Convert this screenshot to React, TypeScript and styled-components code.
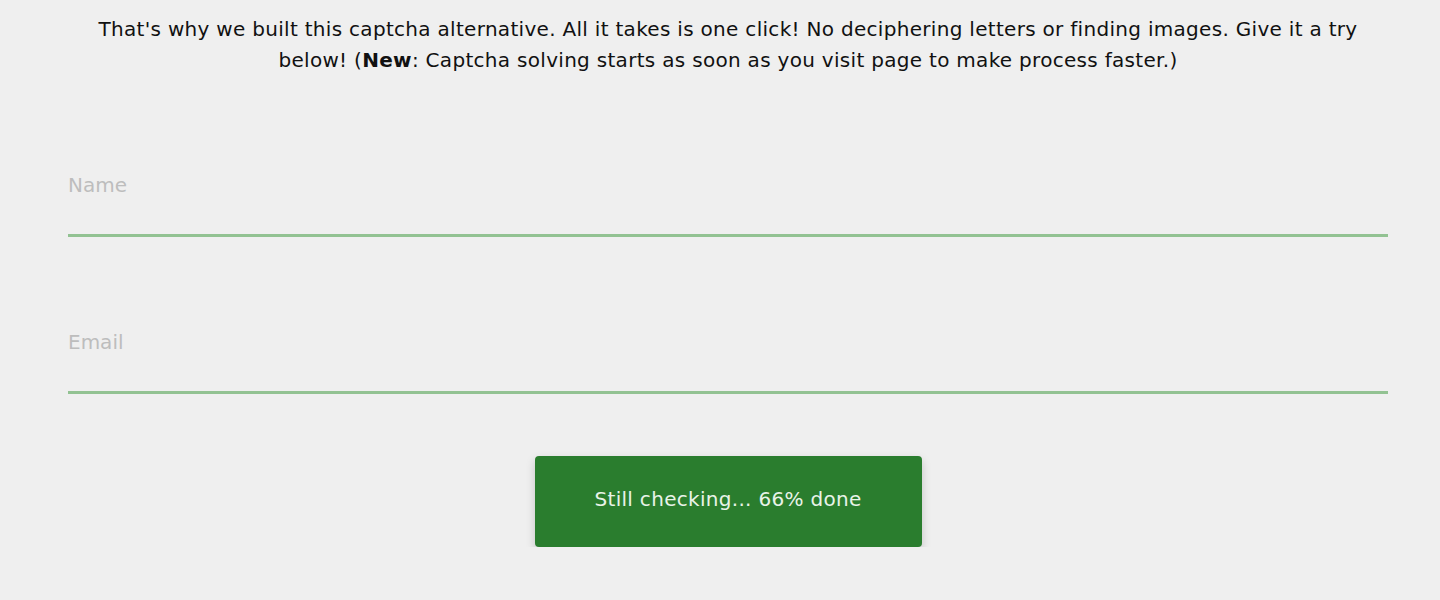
import styled, { createGlobalStyle } from 'styled-components';

const GlobalStyle = createGlobalStyle`
  html, body {
    margin: 0;
    padding: 0;
    background: #efefef;
    font-family: 'DejaVu Sans', 'Liberation Sans', sans-serif;
  }
`;

const Page = styled.div`
  width: 1320px;
  margin-left: 68px;
  padding-top: 14px;
  display: flex;
  flex-direction: column;
  align-items: center;
`;

const Intro = styled.p`
  margin: 0;
  max-width: 1290px;
  text-align: center;
  font-size: 20px;
  line-height: 31px;
  color: #111;
  letter-spacing: 0.3px;
  b {
    font-weight: 700;
  }
`;

const Form = styled.form`
  width: 100%;
  margin-top: 92px;
  display: flex;
  flex-direction: column;
  gap: 88px;
`;

const Field = styled.input`
  display: block;
  box-sizing: border-box;
  width: 100%;
  height: 69px;
  padding: 0 0 32px;
  border: none;
  border-bottom: 3px solid #92c292;
  background: transparent;
  font-family: inherit;
  font-size: 20px;
  color: #222;
  outline: none;
  &::placeholder {
    color: #bdbdbd;
  }
`;

const Submit = styled.button`
  margin-top: 62px;
  width: 387px;
  height: 91px;
  padding: 0 0 6px;
  border: none;
  border-radius: 4px;
  background: #2a7d2e;
  color: #e8f3e8;
  font-family: inherit;
  font-size: 20px;
  letter-spacing: 0.3px;
  box-shadow: 0 4px 10px rgba(0, 0, 0, 0.18);
  cursor: pointer;
`;

export default function App() {
  return (
    <>
      <GlobalStyle />
      <Page>
        <Intro>
          That's why we built this captcha alternative. All it takes is one
          click! No deciphering letters or finding images. Give it a try
          below! (<b>New</b>: Captcha solving starts as soon as you visit page
          to make process faster.)
        </Intro>
        <Form onSubmit={e => e.preventDefault()}>
          <Field type="text" placeholder="Name" />
          <Field type="email" placeholder="Email" />
        </Form>
        <Submit type="button">Still checking... 66% done</Submit>
      </Page>
    </>
  );
}
